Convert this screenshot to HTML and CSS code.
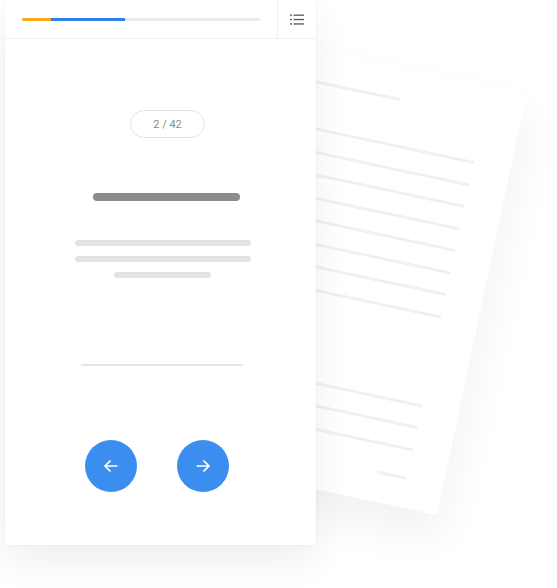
FILE: index.html
```html
<!DOCTYPE html>
<html lang="en">
<head>
    <meta charset="UTF-8">
    <title>Quiz Card</title>
    <link rel="stylesheet" href="styles.css">
</head>
<body>
    <div class="stage">
        <div class="sheet">
            <div class="sheet-line sheet-title"></div>
            <div class="sheet-group">
                <div class="sheet-line"></div>
                <div class="sheet-line"></div>
                <div class="sheet-line"></div>
                <div class="sheet-line"></div>
                <div class="sheet-line"></div>
                <div class="sheet-line"></div>
                <div class="sheet-line"></div>
                <div class="sheet-line"></div>
            </div>
            <div class="sheet-group sheet-group-low">
                <div class="sheet-line"></div>
                <div class="sheet-line"></div>
                <div class="sheet-line"></div>
            </div>
            <div class="sheet-line sheet-short"></div>
        </div>

        <div class="card">
            <header class="card-head">
                <div class="progress">
                    <span class="progress-done"></span>
                    <span class="progress-current"></span>
                </div>
                <button class="menu-btn" aria-label="Questions">
                    <svg width="14" height="11" viewBox="0 0 14 11">
                        <rect x="0" y="0.5" width="2" height="1.3" fill="#4f5866"/>
                        <rect x="3.5" y="0.5" width="10.5" height="1.3" fill="#4f5866"/>
                        <rect x="0" y="4.9" width="2" height="1.3" fill="#4f5866"/>
                        <rect x="3.5" y="4.9" width="10.5" height="1.3" fill="#4f5866"/>
                        <rect x="0" y="9.3" width="2" height="1.3" fill="#4f5866"/>
                        <rect x="3.5" y="9.3" width="10.5" height="1.3" fill="#4f5866"/>
                    </svg>
                </button>
            </header>
            <div class="card-body">
                <div class="counter">2 / 42</div>
                <div class="question"></div>
                <div class="text-line text-line-1"></div>
                <div class="text-line text-line-2"></div>
                <div class="text-line text-line-3"></div>
                <div class="answer"></div>
                <div class="nav">
                    <button class="round-btn" aria-label="Previous">
                        <svg width="22" height="22" viewBox="0 0 24 24"><path d="M19 12H5.5M11.5 6l-6 6 6 6" fill="none" stroke="#fff" stroke-width="1.9"/></svg>
                    </button>
                    <button class="round-btn" aria-label="Next">
                        <svg width="22" height="22" viewBox="0 0 24 24"><path d="M5 12h13.5M12.5 6l6 6-6 6" fill="none" stroke="#fff" stroke-width="1.9"/></svg>
                    </button>
                </div>
            </div>
        </div>
    </div>
</body>
</html>
```

FILE: styles.css
```css
body {
    margin: 0;
    background: #fff;
    font-family: Roboto, "Liberation Sans", sans-serif;
}
.stage {
    position: relative;
    width: 557px;
    height: 588px;
    overflow: hidden;
}

/* tilted sheet behind the card */
.sheet {
    position: absolute;
    left: 97px;
    top: 85px;
    width: 340px;
    height: 430px;
    box-sizing: border-box;
    padding: 30px 37px 0 40px;
    background: #fff;
    transform-origin: 100% 100%;
    transform: rotate(12deg);
    box-shadow: 6px 22px 44px rgba(0, 0, 0, 0.055);
    display: flex;
    flex-direction: column;
    align-items: flex-end;
}
.sheet-group {
    display: flex;
    flex-direction: column;
    gap: 19.5px;
    align-self: stretch;
}
.sheet-group-low {
    margin-top: 88px;
}
.sheet-line {
    height: 3px;
    border-radius: 2px;
    background: #f1f1f1;
}
.sheet-title {
    width: 200px;
    margin-right: 86px;
    margin-bottom: 43px;
}
.sheet-short {
    width: 30px;
    margin-top: 26px;
}

/* main card */
.card {
    position: relative;
    z-index: 1;
    margin-left: 5px;
    width: 311px;
    height: 545px;
    background: #fff;
    box-shadow: 0 0 2px rgba(0, 0, 0, 0.06), 0 16px 36px rgba(0, 0, 0, 0.065);
    display: flex;
    flex-direction: column;
}
.card-head {
    display: flex;
    height: 38px;
    border-bottom: 1px solid #f1f1f1;
}
.progress {
    flex: 1;
    margin: 18px 17px 0 17px;
    height: 3px;
    border-radius: 2px;
    background: #ebebeb;
    display: flex;
}
.progress-done {
    width: 29px;
    background: #f5a623;
    border-radius: 2px 0 0 2px;
}
.progress-current {
    width: 74px;
    background: #2f80e8;
}
.menu-btn {
    width: 39px;
    border: none;
    border-left: 1px solid #f1f1f1;
    background: #fff;
    padding: 0;
    display: flex;
    align-items: center;
    justify-content: center;
}
.card-body {
    display: flex;
    flex-direction: column;
    align-items: flex-start;
}
.counter {
    margin: 71px 0 0 125px;
    width: 75px;
    height: 28px;
    box-sizing: border-box;
    border: 1px solid #e3e3e3;
    border-radius: 14px;
    font-size: 11px;
    color: #8a8a8a;
    display: flex;
    align-items: center;
    justify-content: center;
}
.question {
    margin: 55px 0 0 88px;
    width: 147px;
    height: 8px;
    border-radius: 4px;
    background: #8c8c8c;
}
.text-line {
    height: 6px;
    border-radius: 3px;
    background: #e3e3e3;
}
.text-line-1 {
    margin: 39px 0 0 70px;
    width: 176px;
}
.text-line-2 {
    margin: 10px 0 0 70px;
    width: 176px;
}
.text-line-3 {
    margin: 10px 0 0 109px;
    width: 97px;
}
.answer {
    margin: 86px 0 0 76px;
    width: 162px;
    height: 2px;
    background: #e4e4e4;
}
.nav {
    margin: 74px 0 0 80px;
    display: flex;
    gap: 40px;
}
.round-btn {
    width: 52px;
    height: 52px;
    border: none;
    border-radius: 50%;
    background: #3b8ef0;
    padding: 0;
    display: flex;
    align-items: center;
    justify-content: center;
}
```
